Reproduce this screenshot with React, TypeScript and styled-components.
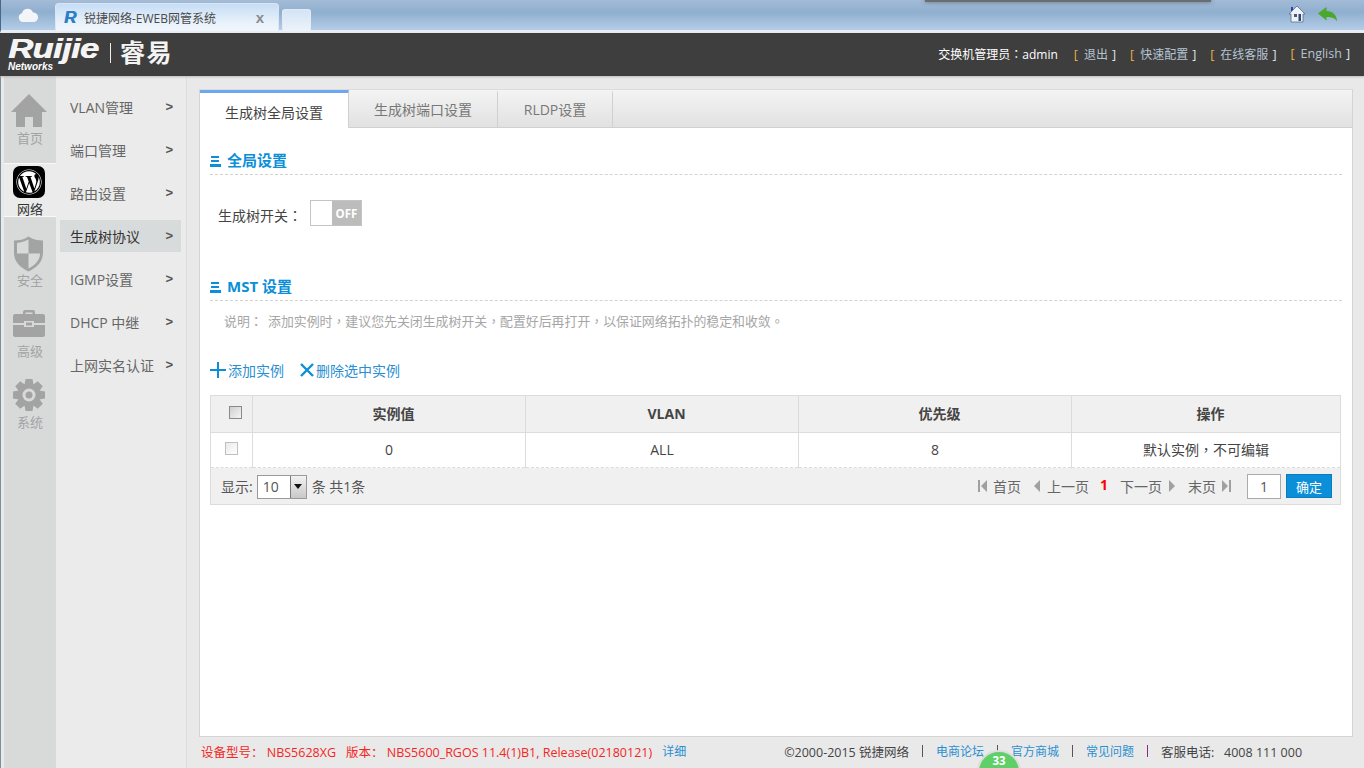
import React from "react";
import styled, { createGlobalStyle } from "styled-components";
import { FaWordpress } from "react-icons/fa";

const Global = createGlobalStyle`
  html, body { margin: 0; padding: 0; height: 100%; overflow: hidden; }
  body { font-family: "Open Sans", "Noto Sans CJK SC", "Liberation Sans", sans-serif; font-size: 13px; color: #444; background: #e9e9e9; }
  #root { height: 768px; }
  * { box-sizing: border-box; }
`;
const CENTRED = `"Open Sans", "Noto Sans CJK TC", sans-serif`;

const Page = styled.div`
  position: relative; width: 1364px; height: 768px; overflow: hidden;
  display: flex; flex-direction: column; background: #e9e9e9;
`;
const BrowserBar = styled.div`
  height: 33px; flex: none; display: flex; align-items: flex-end; padding-left: 1px;
  background: linear-gradient(#a3bbd6, #8fafcf 40%, #b4cde8);
  border-left: 1px solid #46688a; border-bottom: 3px solid #e9eef5; position: relative;
`;
const CloudSlot = styled.div`
  width: 53px; height: 27px; display: flex; align-items: center; justify-content: center; padding: 0 2px 4px 0; align-self: flex-end;
`;
const BrowserTab = styled.div`
  width: 224px; height: 28px; margin-bottom: -1px; display: flex; align-items: center; padding: 0 10px 0 8px;
  border: 1px solid #dbe6f2; border-bottom: none; border-radius: 4px 4px 0 0;
  background: linear-gradient(#c6ddf5, #e9f2fb 70%, #f0f6fc);
  font-size: 12px; color: #4a4a4a;
`;
const TabR = styled.span`
  font: italic bold 17px "Liberation Sans", sans-serif; color: #2b7fc6; width: 20px; flex: none; text-shadow: 0.4px 0 0 #2b7fc6;
`;
const TabTitle = styled.span`flex: 1;`;
const TabClose = styled.span`font: bold 15px "Liberation Sans", sans-serif; color: #8a8a8a; margin-right: 4px;`;
const NewTab = styled.div`
  width: 29px; height: 22px; margin: 0 0 -1px 3px; border: 1px solid #e2ebf5; border-bottom: none; border-radius: 3px 3px 0 0;
  background: linear-gradient(#d4e4f5, #edf3fa);
`;
const BrowserTools = styled.div`
  margin-left: auto; display: flex; align-items: center; gap: 12px; padding: 0 27px 7px 0; align-self: flex-end;
`;
const WindowShadow = styled.div`
  position: absolute; left: 924px; top: -3px; width: 286px; height: 5px; background: #555; box-shadow: 0 0 4px #555; opacity: .75;
`;

const TopBar = styled.header`
  height: 43px; flex: none; background: #3e3e3e; display: flex; align-items: center; justify-content: space-between;
  padding: 0 14px 2px 8px; color: #fff; box-shadow: 0 1px 2px #bbb; position: relative; z-index: 1;
`;
const Logo = styled.div`display: flex; align-items: center; position: relative; height: 40px; color: #f4f4f4;`;
const LogoWord = styled.span`
  font: italic bold 27px/22px "Liberation Sans", sans-serif; letter-spacing: -0.5px; margin: -9px 9px 0 0; width: 93px; text-shadow: 0.6px 0 0 #f4f4f4;
  transform: scaleX(1.28); transform-origin: left center;
`;
const LogoSub = styled.span`
  position: absolute; left: 0; bottom: 2px; font: italic bold 10px/10px "Liberation Sans", sans-serif; color: #fff;
`;
const LogoRule = styled.span`width: 1px; height: 20px; background: #eee; margin: -2px 9px 0 0;`;
const LogoCn = styled.span`font: 700 25px/1 "Noto Sans CJK SC", sans-serif; letter-spacing: 1.5px; margin-top: -4px;`;
const UserBar = styled.div`display: flex; align-items: center; font-size: 12px;`;
const UserName = styled.span`color: #fff; margin-right: 2px; font-size: 12px; font-family: ${CENTRED};`;
const TopLink = styled.span<{ $en?: boolean }>`
  color: #b5c4d2; margin-left: 14px; white-space: nowrap; font-size: ${p => (p.$en ? "12.5px" : "12px")};
  &::before { content: "["; color: #e9b23c; margin-right: 6px; font-size: 12.5px; }
  &::after { content: "]"; color: #dfe6ec; margin-left: 4px; font-size: 12.5px; }
`;

const Body = styled.div`flex: 1; display: flex; min-height: 0; padding-left: 3px; border-left: 1px solid #7d8fa3;`;
const Rail = styled.nav`width: 52px; flex: none; background: #d8dada; padding-top: 16px;`;
const RailItem = styled.div<{ $active?: boolean }>`
  height: 54px; margin-bottom: 17px; position: relative; display: flex; flex-direction: column; align-items: center; justify-content: flex-end;
  font-size: 13px; line-height: 14px;
  color: ${p => (p.$active ? "#333" : "#a3a3a3")};
  background: ${p => (p.$active ? "#ebebeb" : "transparent")};
  border-top: 1px solid ${p => (p.$active ? "#f8f8f8" : "transparent")};
  border-bottom: 1px solid ${p => (p.$active ? "#f8f8f8" : "transparent")};
`;
const RailIcon = styled.span<{ $top: number }>`
  position: absolute; left: 0; right: 3px; top: ${p => p.$top}px; display: flex; justify-content: center; color: #a3a3a3;
`;
const WpBadge = styled.span`
  width: 32px; height: 32px; border-radius: 7px; background: #000; display: flex; align-items: center; justify-content: center; color: #fff;
`;
const SubNav = styled.nav`width: 131px; flex: none; background: #ebebeb; border-right: 1px solid #dcdcdc; padding: 15px 5px 0 4px;`;
const SubItem = styled.div<{ $active?: boolean }>`
  height: 32px; margin-bottom: 11px; display: flex; align-items: center; justify-content: space-between; padding: 0 8px 0 10px;
  font-size: 14px; color: ${p => (p.$active ? "#333" : "#666")};
  background: ${p => (p.$active ? "#d8dbdb" : "transparent")};
`;
const Chevron = styled.span`font: bold 13px "Liberation Sans", sans-serif; color: #555; margin-top: -1px;`;

const Main = styled.main`flex: 1; display: flex; flex-direction: column; padding: 13px 11px 0 12px; min-width: 0;`;
const Panel = styled.section`height: 648px; flex: none; background: #fff; border: 1px solid #d4d4d4; border-top: 1px solid #dcdcdc;`;
const Tabs = styled.div`
  height: 38px; display: flex; background: linear-gradient(#f4f4f4, #e1e1e1); border-bottom: 1px solid #d0d0d0;
`;
const Tab = styled.div<{ $active?: boolean; $w: number }>`
  width: ${p => p.$w}px; margin-bottom: ${p => (p.$active ? "-1px" : "0")}; display: flex; align-items: center; justify-content: center;
  font-size: 14px; border-right: 1px solid #d0d0d0;
  color: ${p => (p.$active ? "#444" : "#777")};
  background: ${p => (p.$active ? "#fff" : "transparent")};
  border-top: 3px solid ${p => (p.$active ? "#6ba8ee" : "transparent")};
  padding: ${p => (p.$active ? "2px 0 0" : "0 0 2px")};
`;
const PanelBody = styled.div`padding: 0 10px;`;
const SectionHead = styled.h2<{ $top: number }>`
  margin: ${p => p.$top}px 0 0; height: 26px; display: flex; align-items: center; gap: 6px; font-size: 15px; font-weight: 700;
  line-height: 20px; color: #0a8fd8; border-bottom: 1px dashed #d2d2d2; padding-bottom: 4px;
`;
const BarsSvg = styled.svg`width: 11px; height: 11px; flex: none; margin-top: 3px;`;
const HeadBars = () => (
  <BarsSvg viewBox="0 0 11 11" shapeRendering="crispEdges">
    <path d="M1 0h8v2H1ZM1 4h8v2H1ZM0 8h11v3H0Z" fill="#0a8fd8" />
  </BarsSvg>
);
const SwitchRow = styled.div`display: flex; align-items: center; height: 26px; margin-top: 25px; padding-left: 8px; font-size: 14px; color: #444; font-family: ${CENTRED};`;
const SwitchLabel = styled.span`width: 92px; padding-top: 3px;`;
const Switch = styled.div`width: 52px; height: 26px; background: #bcbcbc; display: flex; align-items: center; border: 1px solid #c4c4c4;`;
const Knob = styled.span`width: 21px; height: 24px; background: #fff; flex: none;`;
const SwitchText = styled.span`flex: 1; text-align: center; color: #fff; font-size: 11.5px; font-weight: 700;`;
const Note = styled.p`margin: 11px 0 0; padding-left: 14px; font-size: 12.9px; line-height: 18px; color: #a6a6a6; font-family: ${CENTRED}; word-spacing: 2px;`;
const Actions = styled.div`display: flex; align-items: center; height: 20px; margin-top: 30px; font-size: 14px; color: #2a8fd2;`;
const ActionLink = styled.span`display: flex; align-items: center; margin-right: 16px;`;
const Table = styled.table`
  width: 1130px; margin-top: 15px; border-collapse: collapse; table-layout: fixed; font-size: 14px; color: #444;
  border: 1px solid #dcdcdc;
`;
const Th = styled.th<{ $w: number; $check?: boolean }>`
  width: ${p => p.$w}px; height: 37px; background: #f0f0f0; border: 1px solid #dcdcdc; font-size: 14px; font-weight: 700; color: #444;
  padding: 0 0 2px ${p => (p.$check ? "0" : "9px")};
`;
const Td = styled.td`height: 35px; border: 1px solid #dcdcdc; border-bottom: none; text-align: center; padding: 0 0 2px; font-family: ${CENTRED};`;
const FootTd = styled.td`height: 37px; background: #f0f0f0; border-top: 1px dashed #dcdcdc; padding: 0;`;
const Check = styled.span<{ $head?: boolean }>`
  display: inline-block; vertical-align: middle; width: 13px; height: 13px; position: relative;
  top: -2px; left: ${p => (p.$head ? "4px" : "0")};
  border: 1px solid ${p => (p.$head ? "#8a8a8a" : "#c0c0c0")};
  background: linear-gradient(135deg, ${p => (p.$head ? "#cfcfcf, #f4f4f4" : "#eaeaea, #fff")});
`;
const Pager = styled.div`display: flex; align-items: center; height: 36px; padding: 0 8px 0 10px; font-size: 14px; color: #555;`;
const Select = styled.div`
  width: 50px; height: 24px; margin: 1px 5px 0 4px; display: flex; border: 1px solid #9a9a9a; background: #fff; color: #555; font-size: 14px;
  align-items: center; padding-left: 5px; position: relative; justify-content: space-between;
`;
const SelectBtn = styled.span`
  width: 16px; height: 22px; flex: none; display: flex; align-items: center; justify-content: center; border-left: 1px solid #7a7a7a;
  background: linear-gradient(#f2f2f2, #c8c8c8);
`;
const PagerNav = styled.div`margin-left: auto; display: flex; align-items: center; font-size: 14px; color: #666;`;
const PageBtn = styled.span`display: flex; align-items: center; gap: 5px; margin-right: 10px;`;
const PageCur = styled.span`color: #f00; font-weight: 700; font-size: 14px; margin: -4px 12px 0 1px;`;
const PageInput = styled.div`
  width: 34px; height: 25px; margin-left: 5px; border: 1px solid #aaa; background: #fff; display: flex; align-items: center; justify-content: center; font-size: 14px; color: #555;
`;
const ConfirmBtn = styled.div`
  width: 46px; height: 24px; margin-left: 5px; background: #0a8fd8; border: 1px solid #0b7cc0; color: #fff; font-size: 13px;
  display: flex; align-items: center; justify-content: center;
`;

const Footer = styled.footer`display: flex; align-items: center; height: 30px; font-size: 12.5px; padding: 0 0 2px 2px; white-space: nowrap;`;
const Red = styled.span`color: #f4261e; margin-right: 10px;`;
const Link = styled.span`color: #2a8fd2; font-size: 12px;`;
const Right = styled.div`margin-left: 98px; display: flex; align-items: center; color: #444;`;
const Sep = styled.span<{ $c?: string }>`width: 1px; height: 12px; margin: 0 13px; background: ${p => p.$c || "#555"};`;
const Bubble = styled.div`
  position: absolute; left: 977px; top: 750px; width: 44px; height: 44px; border-radius: 50%; background: #5fd068; border: 2px solid #ddd;
  color: #fff; font: bold 11.5px "Open Sans", sans-serif; text-align: center; padding-top: 1px;
`;

const Cloud = () => (
  <svg width="20" height="14" viewBox="0 0 20 14"><path d="M5 14a4.500 4.500 0 0 1-1-8.800A5.800 5.800 0 0 1 15 4.400 4.800 4.800 0 0 1 15.500 14Z" fill="#f3f5f8" /></svg>
);
const TinyHouse = () => (
  <svg width="18" height="18" viewBox="0 0 18 18">
    <path d="M3 2h2v3L3 7Z" fill="#2a3fb0" />
    <path d="M9 1 1 9h2v8h12V9h2Z" fill="#eef2f6" stroke="#5a6f88" strokeWidth=".8" />
    <rect x="6" y="9" width="3" height="3" fill="#4a5a70" /><rect x="10.500" y="9" width="2.500" height="7" fill="#2c4a78" />
  </svg>
);
const BackArrow = () => (
  <svg width="19" height="15" viewBox="0 0 19 15"><path d="M0 6.500 8.500 0v4c6 0 10.500 4 10.500 10.500-2-3.500-5-4.500-10.500-4.500v3.500Z" fill="#4aa82a" /></svg>
);
const HomeIcon = () => (
  <svg width="36" height="33" viewBox="0 0 36 33">
    <path d="M18 0 36 18H31V33H22V23H14V33H5V18H0Z" fill="#a3a3a3" />
  </svg>
);
const Shield = () => (
  <svg width="29" height="36" viewBox="0 0 29 35">
    <path d="M14.500 0C10 3 5 4 0 4v12c0 9 6 15 14.500 19C23 31 29 25 29 16V4c-5 0-10-1-14.500-4Z" fill="#a3a3a3" />
    <path d="M14.500 3C11 5 7 6 3 6.500V17h11.500ZM14.500 17v15c6-3 11.500-8 11.500-15Z" fill="#d8dada" />
  </svg>
);
const Briefcase = () => (
  <svg width="32" height="27" viewBox="0 0 32 27">
    <path d="M10 4V2a2 2 0 0 1 2-2h8a2 2 0 0 1 2 2v2h-2.500V2.500h-7V4Z" fill="#a3a3a3" />
    <path d="M2 4h28a2 2 0 0 1 2 2v7H21v-2H11v2H0V6a2 2 0 0 1 2-2Z" fill="#a3a3a3" />
    <path d="M0 15h11v2h10v-2h11v10a2 2 0 0 1-2 2H2a2 2 0 0 1-2-2Z" fill="#a3a3a3" />
    <rect x="13" y="12.500" width="6" height="3" fill="#a3a3a3" />
  </svg>
);
const Gear = () => (
  <svg width="32" height="32" viewBox="-16 -16 32 32">
    {[0, 45, 90, 135, 180, 225, 270, 315].map(a => (
      <path key={a} d="M-3.500-16h7l1 6h-9Z" fill="#a3a3a3" transform={`rotate(${a})`} />
    ))}
    <circle r="11.500" fill="#a3a3a3" />
    <circle r="6.500" fill="#d8dada" />
    <circle r="3.500" fill="#a3a3a3" />
  </svg>
);
const Plus = () => (
  <svg width="16" height="16" viewBox="0 0 16 16" style={{ marginRight: 2 }}><path d="M7 0h2v7h7v2H9v7H7V9H0V7h7Z" fill="#0a8fd8" /></svg>
);
const Cross = () => (
  <svg width="14" height="14" viewBox="0 0 14 14" style={{ marginRight: 2 }}><path d="M1 1l12 12M13 1 1 13" stroke="#0a8fd8" strokeWidth="2.400" /></svg>
);
const Pg = ({ d }: { d: string }) => (
  <svg width="11" height="14" viewBox="0 0 11 14"><path d={d} fill="#a0a0a0" /></svg>
);

export default function App() {
  const subs = ["VLAN管理", "端口管理", "路由设置", "生成树协议", "IGMP设置", "DHCP 中继", "上网实名认证"];
  return (
    <Page>
      <Global />
      <BrowserBar>
        <WindowShadow />
        <CloudSlot><Cloud /></CloudSlot>
        <BrowserTab>
          <TabR>R</TabR>
          <TabTitle>锐捷网络-EWEB网管系统</TabTitle>
          <TabClose>x</TabClose>
        </BrowserTab>
        <NewTab />
        <BrowserTools><TinyHouse /><BackArrow /></BrowserTools>
      </BrowserBar>
      <TopBar>
        <Logo>
          <LogoWord>Ruijie</LogoWord>
          <LogoSub>Networks</LogoSub>
          <LogoRule />
          <LogoCn>睿易</LogoCn>
        </Logo>
        <UserBar>
          <UserName>交换机管理员：admin</UserName>
          <TopLink>退出</TopLink>
          <TopLink>快速配置</TopLink>
          <TopLink>在线客服</TopLink>
          <TopLink $en>English</TopLink>
        </UserBar>
      </TopBar>
      <Body>
        <Rail>
          <RailItem><RailIcon $top={1}><HomeIcon /></RailIcon>首页</RailItem>
          <RailItem $active><RailIcon $top={2}><WpBadge><FaWordpress size={26} /></WpBadge></RailIcon>网络</RailItem>
          <RailItem><RailIcon $top={1}><Shield /></RailIcon>安全</RailItem>
          <RailItem><RailIcon $top={4}><Briefcase /></RailIcon>高级</RailItem>
          <RailItem><RailIcon $top={2}><Gear /></RailIcon>系统</RailItem>
        </Rail>
        <SubNav>
          {subs.map(s => (
            <SubItem key={s} $active={s === "生成树协议"}>{s}<Chevron>&gt;</Chevron></SubItem>
          ))}
        </SubNav>
        <Main>
          <Panel>
            <Tabs>
              <Tab $active $w={149}>生成树全局设置</Tab>
              <Tab $w={149}>生成树端口设置</Tab>
              <Tab $w={115}>RLDP设置</Tab>
            </Tabs>
            <PanelBody>
              <SectionHead $top={21}><HeadBars />全局设置</SectionHead>
              <SwitchRow>
                <SwitchLabel>生成树开关：</SwitchLabel>
                <Switch><Knob /><SwitchText>OFF</SwitchText></Switch>
              </SwitchRow>
              <SectionHead $top={49}><HeadBars />MST 设置</SectionHead>
              <Note>说明： 添加实例时，建议您先关闭生成树开关，配置好后再打开，以保证网络拓扑的稳定和收敛。</Note>
              <Actions>
                <ActionLink><Plus />添加实例</ActionLink>
                <ActionLink><Cross />删除选中实例</ActionLink>
              </Actions>
              <Table>
                <thead>
                  <tr>
                    <Th $w={42} $check><Check $head /></Th>
                    <Th $w={273}>实例值</Th>
                    <Th $w={273}>VLAN</Th>
                    <Th $w={273}>优先级</Th>
                    <Th $w={269}>操作</Th>
                  </tr>
                </thead>
                <tbody>
                  <tr>
                    <Td><Check /></Td>
                    <Td>0</Td>
                    <Td>ALL</Td>
                    <Td>8</Td>
                    <Td>默认实例，不可编辑</Td>
                  </tr>
                  <tr>
                    <FootTd colSpan={5}>
                      <Pager>
                        显示:
                        <Select>10<SelectBtn><svg width="8" height="5" viewBox="0 0 8 5"><path d="M0 0h8L4 5Z" fill="#111" /></svg></SelectBtn></Select>
                        条 共1条
                        <PagerNav>
                          <PageBtn><Pg d="M1 1h2v12H1ZM10 1v12L4 7Z" />首页</PageBtn>
                          <PageBtn><Pg d="M9 1v12L3 7Z" />上一页</PageBtn>
                          <PageCur>1</PageCur>
                          <PageBtn>下一页<Pg d="M2 1v12l6-6Z" /></PageBtn>
                          <PageBtn>末页<Pg d="M1 1v12l6-6ZM8 1h2v12H8Z" /></PageBtn>
                          <PageInput>1</PageInput>
                          <ConfirmBtn>确定</ConfirmBtn>
                        </PagerNav>
                      </Pager>
                    </FootTd>
                  </tr>
                </tbody>
              </Table>
            </PanelBody>
          </Panel>
          <Footer>
            <Red>设备型号： NBS5628XG</Red>
            <Red>版本： NBS5600_RGOS 11.4(1)B1, Release(02180121)</Red>
            <Link>详细</Link>
            <Right>
              ©2000-2015 锐捷网络
              <Sep />
              <Link>电商论坛</Link>
              <Sep />
              <Link>官方商城</Link>
              <Sep />
              <Link>常见问题</Link>
              <Sep $c="#8a2a8a" />
              客服电话:&nbsp;&nbsp; 4008 111 000
            </Right>
          </Footer>
        </Main>
      </Body>
      <Bubble>33</Bubble>
    </Page>
  );
}
